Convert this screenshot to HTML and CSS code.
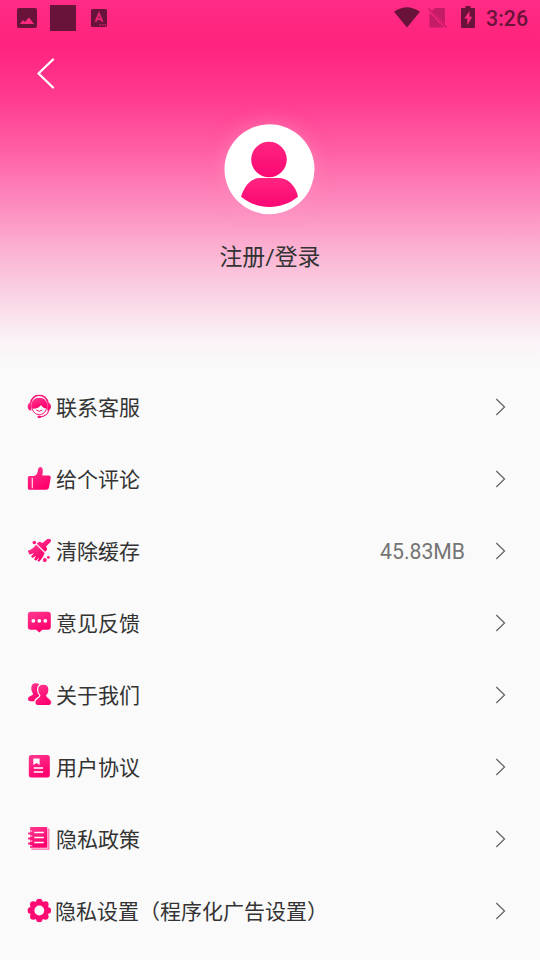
FILE: index.html
```html
<!DOCTYPE html>
<html lang="zh-CN">
<head>
<meta charset="utf-8">
<title>注册/登录</title>
<link rel="stylesheet" href="styles.css">
</head>
<body>
<svg width="0" height="0" class="defs" aria-hidden="true">
  <defs>
    <linearGradient id="pink" x1="0" y1="0" x2="0.5" y2="1"><stop offset="0" stop-color="#ff3b90"/><stop offset="1" stop-color="#ff006e"/></linearGradient>
    <linearGradient id="face" x1="0" y1="0" x2="0" y2="1"><stop offset="0" stop-color="#ff2480"/><stop offset="1" stop-color="#fb0774"/></linearGradient>
  </defs>
</svg>
<header class="hero">
  <div class="status">
    <div class="status-side">
      <svg class="s-image" width="20" height="20" viewBox="0 0 20 20"><path fill-rule="evenodd" d="M2 0h16q2 0 2 2v16q0 2-2 2H2q-2 0-2-2V2q0-2 2-2zM3 16h14l-5-6.500-4 4.500-2-2z"/></svg>
      <span class="s-block"></span>
      <svg class="s-letter" width="16" height="18" viewBox="0 0 16 18"><rect width="16" height="18" rx="1.500"/><path d="M4.500 12.800 8 4.500l3.500 8.300M5.700 10.200h4.600" fill="none" stroke="#e32574" stroke-width="1.900"/><path d="M8.500 15.800h6.500" stroke="#e32574" stroke-width="1.300" stroke-dasharray="1.500 1"/></svg>
    </div>
    <div class="status-side">
      <svg class="s-wifi" width="26" height="21" viewBox="0 0 26 21"><path d="M0 4.800Q13-4.500 26 4.800L13 20.500z"/></svg>
      <svg class="s-sim" width="20" height="22" viewBox="0 0 20 22"><path fill="#c41c67" d="M7 1h8.500q1.500 0 1.500 1.500V17L4 3.700zM1.500 5.500 16 20.500H3q-1.500 0-1.500-1.500z"/><path d="m.5 1.500 18 19" stroke="#c41c67" stroke-width="1.500"/></svg>
      <svg class="s-battery" width="14" height="22" viewBox="0 0 14 22"><path fill-rule="evenodd" d="M4.500 0h5v2H13q1 0 1 1v18q0 1-1 1H1q-1 0-1-1V3q0-1 1-1h3.500zM8.500 5 3.300 12.500h3V19l5-8.200H8.500z"/></svg>
      <span class="clock">3:26</span>
    </div>
  </div>
  <nav class="nav"><svg width="20" height="32" viewBox="0 0 20 32"><path d="M17 2.500 2.500 16.500 17 30.500" fill="none" stroke="#fff" stroke-width="2.300" stroke-linecap="round" stroke-linejoin="round"/></svg></nav>
  <div class="avatar"><svg width="90" height="90" viewBox="0 0 90 90"><g fill="url(#face)"><circle cx="44.500" cy="35.200" r="17.800"/><path d="M16.500 72.500C20 61 27 53.800 35 53.800h19c9 0 17 7 19.500 18.700C57 86 33 86 16.500 72.500z"/></g></svg></div>
  <div class="login">注册/登录</div>
</header>
<main class="menu">
  <div class="row">
    <svg class="icon" viewBox="0 0 24 24"><path d="M3.200 9C4.500-2 19.500-2 20.800 9" fill="none" stroke="#f91678" stroke-width="1.500"/><path d="M4 8v8C1.500 16 .3 14.200.3 12S1.500 8 4 8zm16 0v8c2.500 0 3.700-1.800 3.700-4S22.500 8 20 8z"/><path d="M12 3.200c5 0 8 3.500 8 8.300 0 1-.2 2-.4 2.800-3-.4-4.600-1.700-5.900-3.800-1.700 2.600-5 4-9.300 3.600-.3-.8-.4-1.700-.4-2.600 0-4.800 3-8.300 8-8.300z"/><path d="M4.800 14c1 3.800 3.500 6 7.200 6s6.200-2.200 7.200-6" fill="none" stroke="#fb1678"/><path d="M9 15.500q3 2.600 6 0" fill="none" stroke="#fb1678"/><path d="M21.500 15.500c-.8 4-4.500 6.600-9 6.900" fill="none" stroke="#fb1678" stroke-width="1.200"/><ellipse cx="12" cy="22.300" rx="1.900" ry="1.400"/></svg>
    <span class="label">联系客服</span><svg class="arrow" viewBox="0 0 10 18"><path d="m.8 1 8.200 8-8.200 8"/></svg>
  </div>
  <div class="row">
    <svg class="icon" viewBox="0 0 24 24"><path d="M2 9.500h4.600Q10.300 8.500 10.700 3 11 .5 13 .5c3.500 0 2.500 6 2 8.500h6.500q2.300 0 1.900 2.500l-1.600 9q-.5 2.800-3 2.800H2Q.5 23.300.5 21.500v-10Q.5 9.500 2 9.500z"/><path d="M5 11.300v10.500" stroke="#fff" stroke-opacity=".85" stroke-width="1.200"/></svg>
    <span class="label">给个评论</span><svg class="arrow" viewBox="0 0 10 18"><path d="m.8 1 8.200 8-8.200 8"/></svg>
  </div>
  <div class="row">
    <svg class="icon" viewBox="0 0 24 24"><path d="M22.500.4q2.200 1 .7 3L18.700 8l1 1.700q.4 1.200-.6 2.200l-1.400 1.300-8.200-8L11 3.800q1-.9 2.200-.4l2 1.200L20 .6q1.200-.7 2.500-.2z"/><path d="m8.800 6.300 8.500 8.200c-1.200 3.500-3 6.200-5.600 8.800l-1.400-.9 1.500-3.700-3 3.500-2-1.500 2-3.500-3.500 2.400L3.700 18l3-3.600-4.400 1.900L.4 12.200c3.800-1 6.200-2.800 8.400-5.900z"/><circle cx="7" cy="4" r="1.800"/><circle cx="17.500" cy="21.500" r="2"/><circle cx="21" cy="18.800" r="1.400"/></svg>
    <span class="label">清除缓存</span><span class="value">45.83MB</span><svg class="arrow" viewBox="0 0 10 18"><path d="m.8 1 8.200 8-8.200 8"/></svg>
  </div>
  <div class="row">
    <svg class="icon" viewBox="0 0 24 24"><path d="M3.500 1.200h17q3 0 3 3v12q0 3-3 3H15L12 22l-3-2.800H3.500q-3 0-3-3v-12q0-3 3-3z"/><g fill="#fff"><circle cx="6" cy="10.300" r="1.900"/><circle cx="12" cy="10.300" r="1.900"/><circle cx="18" cy="10.300" r="1.900"/></g></svg>
    <span class="label">意见反馈</span><svg class="arrow" viewBox="0 0 10 18"><path d="m.8 1 8.200 8-8.200 8"/></svg>
  </div>
  <div class="row">
    <svg class="icon" viewBox="0 0 24 24"><path d="M8.500.8c3 0 4.600 2 4.600 4.700 0 2-.8 3.200-1.600 4.300-.8 1.300 0 2.200 2 3L9 18.700H3q-2.500 0-2.200-3c.2-2.500 4.700-2 5-4.500C4.500 9.300 4 7.500 4 5.500 4 2.800 5.500.8 8.500.8z"/><path stroke="#fafafa" stroke-width="1.200" d="M16 1.600c3.900 0 5.700 2.500 5.700 5.600 0 2.500-1 4.300-2.200 5.600-.3 3 4.800 2.200 4.800 6.800q0 3.600-3 3.600H10.500q-3 0-3-3.600c0-4.600 5.300-3.800 5-6.800-1.200-1.300-2.200-3.100-2.200-5.600 0-3.100 1.800-5.600 5.700-5.600z"/></svg>
    <span class="label">关于我们</span><svg class="arrow" viewBox="0 0 10 18"><path d="m.8 1 8.200 8-8.200 8"/></svg>
  </div>
  <div class="row">
    <svg class="icon" viewBox="0 0 24 24"><rect x="1.500" y=".5" width="21" height="22.500" rx="2.500"/><path fill="#fff" d="M6 4h6.300v6.500L9.200 8.400 6 10.500z"/><path d="M6.500 13.500h9.300M6.500 17.500h9.300" stroke="#fff" stroke-width="1.500"/></svg>
    <span class="label">用户协议</span><svg class="arrow" viewBox="0 0 10 18"><path d="m.8 1 8.200 8-8.200 8"/></svg>
  </div>
  <div class="row">
    <svg class="icon" viewBox="0 0 24 24"><path fill="none" stroke="#ff65a6" stroke-width="1.200" d="M21.500 2v20.700H4"/><path d="M3 .5h15.800q1.300 0 1.300 1.300v19.500H2.700V18H.8v-2h1.900v-3H.8v-2h1.900V8H.8V6h1.900V3z"/><path d="M7 6h9.500M7 11h9.500M7 16h9.500" stroke="#fff" stroke-width="1.500"/><path d="M1 4.500h4M1 9.500h4M1 14.500h4M1 19.300h4" stroke="#fff" stroke-width=".9"/></svg>
    <span class="label">隐私政策</span><svg class="arrow" viewBox="0 0 10 18"><path d="m.8 1 8.200 8-8.200 8"/></svg>
  </div>
  <div class="row row-settings">
    <svg class="icon" viewBox="0 0 24 24"><g fill="#fd0b73"><circle cx="12" cy="12" r="9.600"/><circle cx="12" cy="3.400" r="3.200"/><circle cx="18.100" cy="5.900" r="3.200"/><circle cx="20.600" cy="12" r="3.200"/><circle cx="18.100" cy="18.100" r="3.200"/><circle cx="12" cy="20.600" r="3.200"/><circle cx="5.900" cy="18.100" r="3.200"/><circle cx="3.400" cy="12" r="3.200"/><circle cx="5.900" cy="5.900" r="3.200"/></g><circle cx="12" cy="12" r="4.900" fill="#fff"/></svg>
    <span class="label">隐私设置（程序化广告设置）</span><svg class="arrow" viewBox="0 0 10 18"><path d="m.8 1 8.200 8-8.200 8"/></svg>
  </div>
</main>
</body>
</html>
```
FILE: styles.css
```css
* { box-sizing: border-box; }
body {
  margin: 0;
  width: 540px;
  height: 960px;
  overflow: hidden;
  background: #fafafa;
  color: #333;
  font-family: Roboto, "Noto Sans CJK SC", sans-serif;
}
svg { display: block; flex: none; }
.defs { position: absolute; }
.hero {
  height: 371px;
  background: linear-gradient(#ff2b86 0, #ff267f 30px, #ff247f 48px, #ff3c90 100px, #ff5fa4 150px, #fd87bc 200px, #fbb2d2 250px, #f9d7e6 300px, #faf3f7 340px, #fafafa 365px);
}
.status {
  height: 36px;
  display: flex;
  justify-content: space-between;
  padding: 0 12px 0 17px;
  fill: #69133b;
}
.status-side { display: flex; align-items: center; }
.s-block { width: 26px; height: 26px; margin: 0 15px 0 13px; background: #69133b; }
.s-wifi { margin-right: 8px; margin-top: -2px; }
.s-sim { margin-right: 13px; }
.s-battery { margin-right: 11px; margin-top: -2px; }
.clock { color: #69133b; font-size: 21.300px; font-weight: 500; line-height: 37px; padding-top: 1px; }
.nav { height: 73px; padding: 21px 0 0 36px; }
.avatar {
  width: 90px;
  height: 90px;
  margin: 15px auto 0;
  border-radius: 50%;
  background: #fff;
  box-shadow: 0 0 18px rgba(255, 150, 195, .5);
  transform: translate(-.5px, .3px);
}
.login {
  margin-top: 28px;
  text-align: center;
  font-size: 22.900px;
  line-height: 32px;
}
.row {
  height: 72px;
  display: flex;
  align-items: center;
  padding: 0 34px 0 27px;
}
.icon { width: 24px; height: 24px; margin-right: 5px; fill: url(#pink); transform: translate(.3px, -.5px); }
.row-settings .icon { margin-right: 4px; }
.label { padding-top: 2px; font-size: 21px; line-height: 30px; white-space: nowrap; }
.value { margin-left: auto; padding-top: 2px; color: #757575; font-size: 21.200px; line-height: 30px; }
.arrow { width: 11px; height: 18px; margin-left: auto; fill: none; stroke: #686868; stroke-width: 1.300; }
.value + .arrow { margin-left: 30px; }
```
